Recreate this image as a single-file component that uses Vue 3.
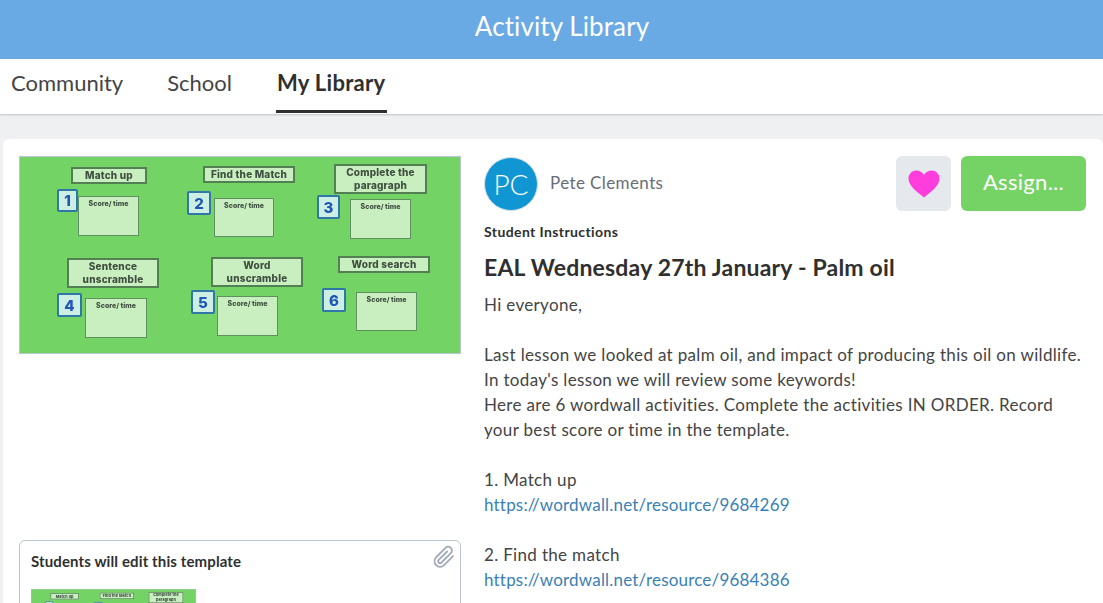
<script setup>
// positions are measured on the 442x198 slide
const labels = [
  { x: 52, y: 11, w: 76, h: 17, text: 'Match up' },
  { x: 184, y: 10, w: 92, h: 17, text: 'Find the Match' },
  { x: 315, y: 8, w: 93, h: 30, text: 'Complete the\nparagraph' },
  { x: 48, y: 102, w: 92, h: 30, text: 'Sentence\nunscramble' },
  { x: 192, y: 101, w: 92, h: 30, text: 'Word\nunscramble' },
  { x: 319, y: 100, w: 92, h: 17, text: 'Word search' }
]
const badges = [
  { x: 38, y: 33, w: 21, h: 23, n: 1 },
  { x: 168, y: 35, w: 24, h: 24, n: 2 },
  { x: 298, y: 39, w: 23, h: 24, n: 3 },
  { x: 38, y: 137, w: 25, h: 24, n: 4 },
  { x: 172, y: 134, w: 24, h: 24, n: 5 },
  { x: 303, y: 132, w: 24, h: 24, n: 6 }
]
const scores = [
  { x: 59, y: 40, w: 61, h: 40 },
  { x: 195, y: 42, w: 60, h: 39 },
  { x: 331, y: 43, w: 61, h: 40 },
  { x: 66, y: 142, w: 62, h: 40 },
  { x: 198, y: 140, w: 61, h: 40 },
  { x: 337, y: 136, w: 61, h: 39 }
]

function box(item) {
  return {
    left: item.x + 'px',
    top: item.y + 'px',
    width: item.w + 'px',
    height: item.h + 'px'
  }
}
</script>

<template>
  <div class="page">
    <header class="topbar">Activity Library</header>

    <nav class="tabs">
      <a class="tab tab-community">Community</a>
      <a class="tab tab-school">School</a>
      <a class="tab active">My Library</a>
    </nav>

    <main class="card">
      <section class="left">
        <div class="slide">
          <div v-for="l in labels" :key="l.text" class="s-label" :style="box(l)">{{ l.text }}</div>
          <div v-for="b in badges" :key="b.n" class="s-badge" :style="box(b)">{{ b.n }}</div>
          <div v-for="(s, i) in scores" :key="i" class="s-score" :style="box(s)">Score/ time</div>
        </div>

        <div class="template">
          <svg class="clip" viewBox="0 0 24 24" width="24" height="24" fill="none" stroke="#a3abb8" stroke-width="1.9" stroke-linecap="round" stroke-linejoin="round">
            <path d="M21 11.2l-9.2 9.2a5.6 5.6 0 0 1-7.9-7.9l9.6-9.6a3.7 3.7 0 0 1 5.3 5.3l-9.6 9.5a1.9 1.9 0 0 1-2.7-2.6l8.6-8.6" />
          </svg>
          <h3>Students will edit this template</h3>
          <div class="thumb-wrap">
            <div class="slide slide-small">
              <div v-for="l in labels" :key="l.text" class="s-label" :style="box(l)">{{ l.text }}</div>
              <div v-for="b in badges" :key="b.n" class="s-badge" :style="box(b)">{{ b.n }}</div>
              <div v-for="(s, i) in scores" :key="i" class="s-score" :style="box(s)">Score/ time</div>
            </div>
          </div>
        </div>
      </section>

      <section class="right">
        <div class="author-row">
          <div class="avatar">PC</div>
          <span class="author">Pete Clements</span>
          <div class="actions">
            <button class="like">
              <svg viewBox="0 0 32 28" width="32" height="28">
                <path fill="#ff3ddc" d="M16 27.5C11 23.4 0.5 16.6 0.5 8.6 0.5 3.8 4.1 0.5 8.4 0.5c3.2 0 5.9 1.6 7.6 4.5 1.7-2.9 4.4-4.5 7.6-4.5 4.3 0 7.9 3.3 7.9 8.1 0 8-10.5 14.8-15.5 18.9z" />
              </svg>
            </button>
            <button class="assign">Assign...</button>
          </div>
        </div>

        <div class="kicker">Student Instructions</div>
        <h2>EAL Wednesday 27th January - Palm oil</h2>

        <div class="body">
          <p>Hi everyone,</p>
          <p>&nbsp;</p>
          <p>Last lesson we looked at palm oil, and impact of producing this oil on wildlife.</p>
          <p>In today's lesson we will review some keywords!</p>
          <p>Here are 6 wordwall activities. Complete the activities IN ORDER. Record</p>
          <p>your best score or time in the template.</p>
          <p>&nbsp;</p>
          <p>1. Match up</p>
          <p><a>https://wordwall.net/resource/9684269</a></p>
          <p>&nbsp;</p>
          <p>2. Find the match</p>
          <p><a>https://wordwall.net/resource/9684386</a></p>
        </div>
      </section>
    </main>
  </div>
</template>

<style>
html, body {
  margin: 0;
  overflow: hidden;
}
</style>

<style scoped>
.page {
  height: 603px;
  overflow: hidden;
  background: #eff0f2;
  font-family: "Lato", "Open Sans", sans-serif;
  color: #2f2f2f;
}

.topbar {
  box-sizing: border-box;
  height: 59px;
  padding-left: 21px;
  line-height: 52px;
  background: #6aaae4;
  color: #fff;
  text-align: center;
  font-size: 26px;
  letter-spacing: 0.1px;
}

.tabs {
  display: flex;
  height: 55px;
  padding-left: 11px;
  background: #fff;
  box-shadow: 0 1px 2px rgba(0, 0, 0, 0.2);
}

.tab {
  height: 54px;
  line-height: 47px;
  box-sizing: border-box;
  font-size: 22px;
  color: #444;
}

.tab-community {
  margin-right: 44px;
}

.tab-school {
  margin-right: 44px;
}

.tab.active {
  padding: 0 1px;
  font-weight: 700;
  letter-spacing: 0.3px;
  color: #2f2f2f;
  border-bottom: 3px solid #2f2f2f;
}

.card {
  display: flex;
  gap: 23px;
  margin: 25px 0 0 3px;
  padding: 17px 17px 0 16px;
  background: #fff;
  border-radius: 6px;
  height: 500px;
}

.left {
  flex: 0 0 442px;
}

.slide {
  position: relative;
  width: 442px;
  height: 198px;
  background: #74d365;
  outline: 1px solid #bcc6d2;
  outline-offset: -1px;
  overflow: hidden;
  font-family: "Inter", sans-serif;
  filter: blur(0.45px);
}

.s-label {
  position: absolute;
  box-sizing: border-box;
  display: flex;
  align-items: center;
  justify-content: center;
  text-align: center;
  white-space: pre-line;
  background: #c9efc0;
  border: 2px solid #527f54;
  font-size: 10px;
  line-height: 13px;
  letter-spacing: 0.2px;
  font-weight: 800;
  color: #3f4f40;
}

.s-badge {
  position: absolute;
  box-sizing: border-box;
  display: flex;
  align-items: center;
  justify-content: center;
  background: #cdeee2;
  border: 2px solid #2f77a8;
  border-radius: 2px;
  font-size: 15px;
  font-weight: 800;
  color: #1f56b8;
}

.s-score {
  position: absolute;
  box-sizing: border-box;
  padding-top: 2px;
  text-align: center;
  background: #c9efc0;
  border: 1.5px solid #5f9060;
  font-size: 7px;
  font-weight: 800;
  color: #3f4f40;
}

.template {
  position: relative;
  box-sizing: border-box;
  height: 120px;
  margin-top: 186px;
  padding: 12px 11px;
  border: 1px solid #bcc6d2;
  border-radius: 6px;
}

.template h3 {
  margin: 0;
  font-size: 15px;
  line-height: 17px;
  letter-spacing: 0.12px;
  font-weight: 700;
  color: #2f2f2f;
}

.clip {
  position: absolute;
  top: 4px;
  right: 4px;
}

.thumb-wrap {
  width: 165px;
  height: 74px;
  margin-top: 19px;
  overflow: hidden;
}

.slide-small {
  transform: scale(0.3733);
  transform-origin: 0 0;
}

.right {
  flex: 1;
  min-width: 0;
}

.author-row {
  display: flex;
  align-items: center;
  height: 55px;
}

.avatar {
  box-sizing: border-box;
  width: 54px;
  height: 54px;
  line-height: 52px;
  text-align: center;
  border-radius: 50%;
  border: 1px solid #d9dfe4;
  background: #0f96d3;
  color: #fff;
  font-size: 28px;
  font-weight: 300;
}

.author {
  margin: -2px 0 0 12px;
  font-size: 17px;
  letter-spacing: 0.4px;
  color: #686d78;
}

.actions {
  display: flex;
  gap: 10px;
  margin-left: auto;
}

.like {
  display: flex;
  align-items: center;
  justify-content: center;
  width: 55px;
  height: 55px;
  padding: 0;
  border: 0;
  border-radius: 6px;
  background: #e5e8ec;
}

.assign {
  width: 125px;
  height: 55px;
  padding: 0 0 4px;
  border: 0;
  border-radius: 6px;
  background: #75d366;
  color: #fff;
  font-family: inherit;
  font-size: 22px;
  letter-spacing: 0.3px;
}

.kicker {
  margin-top: 12px;
  font-size: 14px;
  line-height: 18px;
  letter-spacing: 0.4px;
  font-weight: 700;
}

h2 {
  margin: 12px 0 0;
  font-size: 23px;
  line-height: 28px;
  letter-spacing: 0.2px;
  font-weight: 700;
  color: #2f2f2f;
}

.body {
  margin-top: 11px;
  font-size: 17px;
  line-height: 25px;
  letter-spacing: 0.33px;
  color: #444;
  white-space: nowrap;
}

.body p {
  margin: 0;
}

.body a {
  color: #3a7fb5;
  letter-spacing: 0.19px;
}
</style>
